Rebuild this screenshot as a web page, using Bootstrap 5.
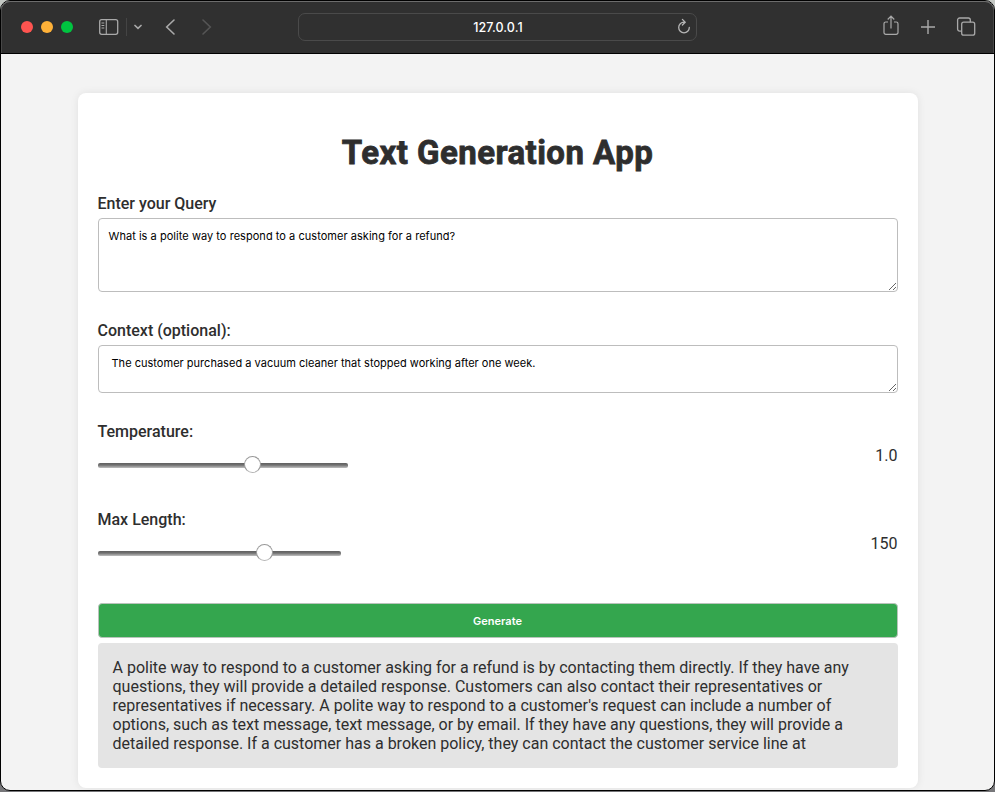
<!DOCTYPE html>
<html lang="en">
<head>
<meta charset="utf-8">
<meta name="viewport" content="width=device-width, initial-scale=1">
<title>Text Generation App</title>
<link href="https://cdn.jsdelivr.net/npm/bootstrap@5.3.0/dist/css/bootstrap.min.css" rel="stylesheet">
<style>
html,body{height:100%}
body{overflow:hidden;background:linear-gradient(#c4c8c4 0 20px,#77777a 20px);font-family:Roboto,sans-serif;font-size:16px;line-height:19px;color:#2e2e2e}
.window{height:791px;background:#f3f3f3;border:1px solid #000;border-radius:10px}
.toolbar{height:53px;background:#303030;border-bottom:1px solid #000;box-shadow:inset 0 1px 0 #6c6c6c,inset 1px 0 0 #484848,inset -1px 0 0 #484848;border-radius:9px 9px 0 0;padding:0 18px 0 20px;color:#a9a9a9}
.toolbar svg{display:block;fill:none;stroke:currentColor;flex:none}
.light{width:12px;height:12px;border-radius:50%}
.red{background:#ff5450}.amber{background:#ffb138}.green{background:#00c440}
.divider{width:1px;height:18px;background:#444;margin:0 7px 0 6px}
.address{width:400px;height:28px;border:1px solid #4a4a4a;border-radius:7px;color:#fff;font:500 12.5px/1 Inter,sans-serif;letter-spacing:.08px;padding-right:5px;margin-right:2px}
.address span{padding-top:2px}
.address .reload{color:#b5b5b5}
.side{width:277px}
.panel{width:840px;height:695px;margin:39px auto 0;padding:20px;border-radius:8px;background:#fff;box-shadow:0 0 8px rgba(0,0,0,.08)}
h1{font-size:33px;line-height:38px;font-weight:700;margin:21px 0 22px;letter-spacing:.45px;-webkit-text-stroke:.8px #2e2e2e;color:#2e2e2e}
label{font-weight:500;display:block;margin-bottom:5px}
.entry.form-control{padding:10px;border:1px solid #bdbdbd;border-radius:4px;font:11px/15px Inter,sans-serif;color:#000;resize:vertical;overflow:hidden}
#query.entry{height:74px;margin-bottom:29px;letter-spacing:.04px}
#context.entry{height:48px;margin-bottom:29px;letter-spacing:.02px;padding-left:13px}
.setting{height:88px}
.setting .controls{height:38px}
input[type=range]{-webkit-appearance:none;appearance:none;background:none;height:18px;margin:10px 0 0;padding:0;display:block}
#temperature{width:250px}#length{width:243px}
input[type=range]::-webkit-slider-runnable-track{height:5px;border-radius:2px;background:linear-gradient(#606060,#707070 40%,#c0c0c0)}
input[type=range]::-webkit-slider-thumb{-webkit-appearance:none;width:17px;height:17px;margin-top:-6.5px;border-radius:50%;background:#fff;border:1px solid #999;border-bottom-color:#b5b5b5}
.generate.btn{height:35px;padding:1px 0 0;border:1px solid #b9c3bb;border-radius:4px;background:#34a64e;color:#fff;font:600 11px/15px Inter,sans-serif;margin:5px 0}
.answer{height:125px;padding:15px;background:#e4e4e4;border-radius:4px}
</style>
</head>
<body>
<div class="window d-flex flex-column">
  <header class="toolbar d-flex align-items-center justify-content-between flex-shrink-0">
    <div class="side d-flex align-items-center">
      <div class="d-flex gap-2"><span class="light red"></span><span class="light amber"></span><span class="light green"></span></div>
      <svg style="margin-left:25px" width="22" height="18" viewBox="0 0 22 18" stroke-width="1.3"><rect x="1.7" y="1.7" width="18" height="14.6" rx="2"/><path d="M8.3 1.7v14.6M3.5 5h2.8M3.5 7.5h2.8M3.5 10h2.8" stroke-width="1.1"/></svg>
      <span class="divider"></span>
      <svg width="8" height="8" viewBox="0 0 8 8" stroke-width="1.7"><path d="M1 2.5 4 5.3 7 2.5" stroke-linecap="round"/></svg>
      <svg style="margin-left:23px" width="11" height="18" viewBox="0 0 11 18" stroke-width="1.6"><path d="M9 2 1.7 9 9 16" stroke-linecap="round"/></svg>
      <svg style="margin-left:25px;color:#555" width="11" height="18" viewBox="0 0 11 18" stroke-width="1.6"><path d="M2 2 9.3 9 2 16" stroke-linecap="round"/></svg>
    </div>
    <div class="address d-flex align-items-center">
      <span class="flex-fill text-center ps-3 ms-1">127.0.0.1</span>
      <svg class="reload" width="14" height="18" viewBox="0 0 14 18" stroke-width="1.3"><path d="M7.4 4.2H7A5.3 5.3 0 1 0 12.3 9.5M5.4 1.4 8.2 4.2 5.4 7" stroke-linecap="round"/></svg>
    </div>
    <div class="side d-flex align-items-center justify-content-end">
      <svg class="mb-1" width="18" height="22" viewBox="0 0 18 22" stroke-width="1.2"><path d="M6 8H3.8A1.8 1.8 0 0 0 2 9.8v8.7a1.8 1.8 0 0 0 1.8 1.8h10.4a1.8 1.8 0 0 0 1.8-1.8V9.8A1.8 1.8 0 0 0 14.2 8H12M9 14.5V2.3M5.7 5.5 9 2.2 12.3 5.5"/></svg>
      <svg style="margin:0 20px" width="16" height="16" viewBox="0 0 16 16" stroke-width="1.4"><path d="M8 1v14M1 8h14"/></svg>
      <svg width="20" height="20" viewBox="0 0 20 20" stroke-width="1.3"><rect x="5.7" y="5.2" width="13" height="13" rx="2"/><path d="M5.7 14.1H3.6a2 2 0 0 1-2-2V3a2 2 0 0 1 2-2h8.7a2 2 0 0 1 2 2v2.2"/></svg>
    </div>
  </header>
  <main class="panel flex-shrink-0">
    <h1 class="text-center">Text Generation App</h1>
    <form>
      <label for="query">Enter your Query</label>
      <textarea class="form-control entry" id="query">What is a polite way to respond to a customer asking for a refund?</textarea>
      <label for="context">Context (optional):</label>
      <textarea class="form-control entry" id="context">The customer purchased a vacuum cleaner that stopped working after one week.</textarea>
      <div class="setting">
        <label for="temperature">Temperature:</label>
        <div class="controls d-flex justify-content-between"><input type="range" id="temperature" min="0" max="100" value="63"><output>1.0</output></div>
      </div>
      <div class="setting">
        <label for="length">Max Length:</label>
        <div class="controls d-flex justify-content-between"><input type="range" id="length" min="0" max="100" value="70"><output>150</output></div>
      </div>
      <button type="button" class="btn generate w-100 d-block">Generate</button>
    </form>
    <div class="answer">A polite way to respond to a customer asking for a refund is by contacting them directly. If they have any questions, they will provide a detailed response. Customers can also contact their representatives or representatives if necessary. A polite way to respond to a customer's request can include a number of options, such as text message, text message, or by email. If they have any questions, they will provide a detailed response. If a customer has a broken policy, they can contact the customer service line at</div>
  </main>
</div>
<script src="https://cdn.jsdelivr.net/npm/bootstrap@5.3.0/dist/js/bootstrap.bundle.min.js"></script>
</body>
</html>
